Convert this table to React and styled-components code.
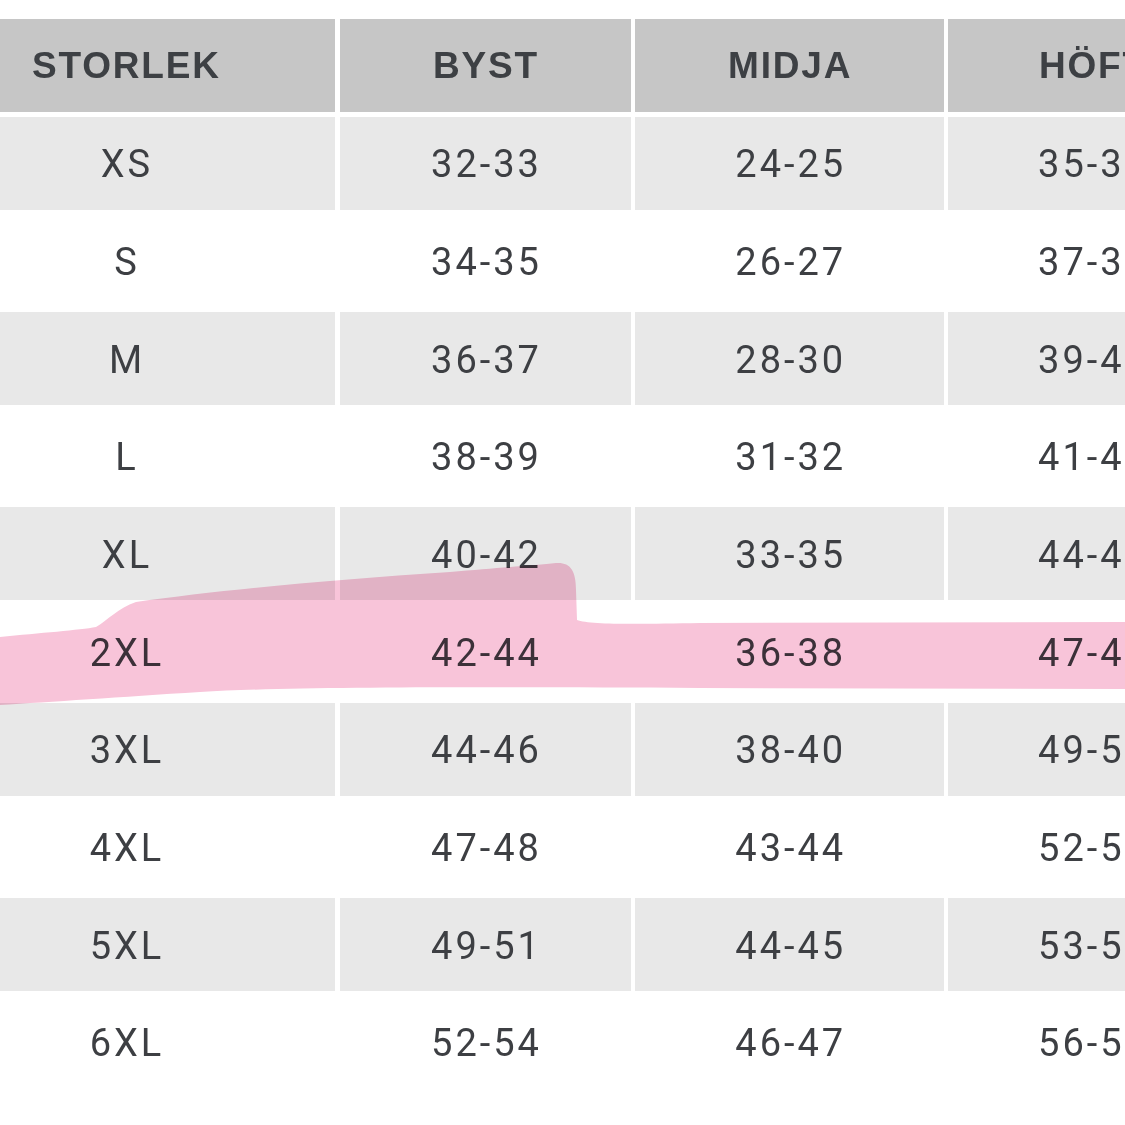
import React from 'react'
import styled, { createGlobalStyle } from 'styled-components'

const GlobalStyle = createGlobalStyle`
  html,
  body {
    margin: 0;
    padding: 0;
    background: #ffffff;
    overflow: hidden;
  }
`

const HEADER_COLOR = '#c6c6c6'
const STRIPE_COLOR = '#e8e8e8'
const TEXT_COLOR = '#3d3f43'

const Page = styled.div`
  position: relative;
  width: 1125px;
  height: 1125px;
  overflow: hidden;
  padding-top: 19px;
  box-sizing: border-box;
`

const SizeGrid = styled.div`
  display: grid;
  grid-template-columns: 419px 291px 308.5px 288px;
  grid-auto-rows: 93px;
  column-gap: 4.5px;
  row-gap: 4.7px;
  margin-left: -84px;
  width: max-content;
`

const HeadCell = styled.div`
  display: flex;
  align-items: center;
  justify-content: center;
  background: ${HEADER_COLOR};
  color: #3d4044;
  font-family: 'Liberation Sans', Arial, sans-serif;
  font-weight: 700;
  font-size: 37px;
  letter-spacing: 1.8px;
  padding-left: 1.8px;
`

const DataCell = styled.div`
  display: flex;
  align-items: center;
  justify-content: center;
  padding-top: 2px;
  box-sizing: border-box;
  background: ${({ $striped }) => ($striped ? STRIPE_COLOR : '#ffffff')};
  color: ${TEXT_COLOR};
  font-family: Roboto, 'Liberation Sans', sans-serif;
  font-size: 38px;
  letter-spacing: 3px;
  padding-left: 3px;
`

const Marker = styled.svg`
  position: absolute;
  top: 0;
  left: 0;
  pointer-events: none;
  mix-blend-mode: multiply;
`

const categories = ['STORLEK', 'BYST', 'MIDJA', 'HÖFT']

const sizes = [
  ['XS', '32-33', '24-25', '35-36'],
  ['S', '34-35', '26-27', '37-38'],
  ['M', '36-37', '28-30', '39-40'],
  ['L', '38-39', '31-32', '41-43'],
  ['XL', '40-42', '33-35', '44-46'],
  ['2XL', '42-44', '36-38', '47-48'],
  ['3XL', '44-46', '38-40', '49-51'],
  ['4XL', '47-48', '43-44', '52-53'],
  ['5XL', '49-51', '44-45', '53-55'],
  ['6XL', '52-54', '46-47', '56-58'],
]

// highlighter stroke drawn over the 2XL row
const markerPath =
  'M0 637 C40 633 80 630 96 627 C108 620 118 608 136 602 ' +
  'C220 590 330 580 450 572 C500 568 535 565 556 563 ' +
  'C570 562 576 570 576 590 L577 620 C590 625 640 624 700 623 ' +
  'L1125 622 L1125 689 L700 688 C500 687 300 686 200 692 ' +
  'C120 697 50 702 0 705 Z'

const App = () => {
  return (
    <>
      <GlobalStyle />
      <Page>
        <SizeGrid>
          {categories.map((category, idx) => (
            <HeadCell key={`head__${idx}`}>{category}</HeadCell>
          ))}
          {sizes.map((row, rIdx) =>
            row.map((value, cIdx) => (
              <DataCell key={`cell__${rIdx}_${cIdx}`} $striped={rIdx % 2 === 0}>
                {value}
              </DataCell>
            ))
          )}
        </SizeGrid>
        <Marker width="1125" height="1125" viewBox="0 0 1125 1125">
          <path d={markerPath} fill="#f8c4d9" />
        </Marker>
      </Page>
    </>
  )
}

export default App
